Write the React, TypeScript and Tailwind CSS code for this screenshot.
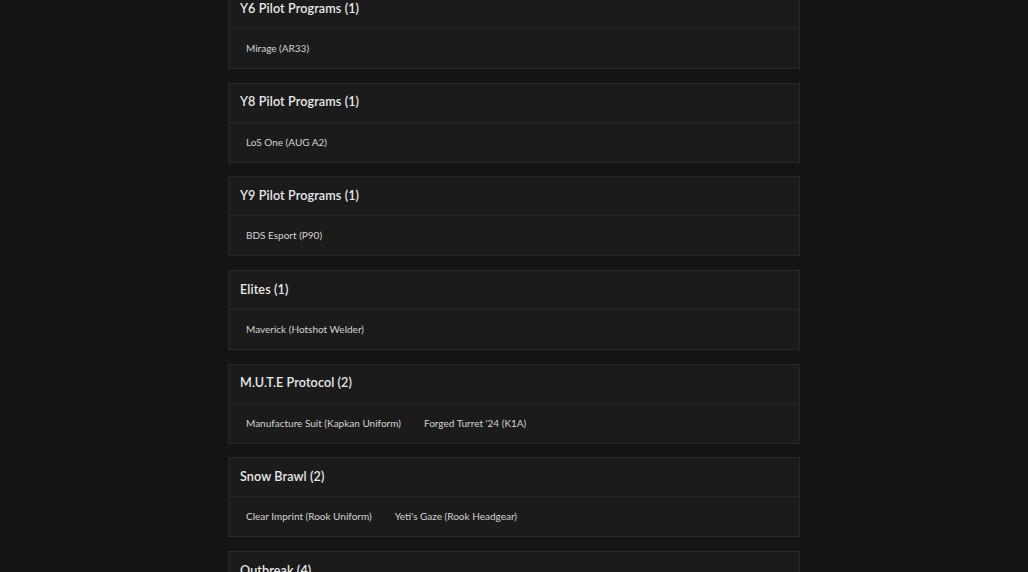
import React from "react";

const cards: { title: string; items: string[] }[] = [
  { title: "Y6 Pilot Programs (1)", items: ["Mirage (AR33)"] },
  { title: "Y8 Pilot Programs (1)", items: ["LoS One (AUG A2)"] },
  { title: "Y9 Pilot Programs (1)", items: ["BDS Esport (P90)"] },
  { title: "Elites (1)", items: ["Maverick (Hotshot Welder)"] },
  { title: "M.U.T.E Protocol (2)", items: ["Manufacture Suit (Kapkan Uniform)", "Forged Turret '24 (K1A)"] },
  { title: "Snow Brawl (2)", items: ["Clear Imprint (Rook Uniform)", "Yeti's Gaze (Rook Headgear)"] },
  { title: "Outbreak (4)", items: ["Item"] },
];

export default function App() {
  return (
    <div
      className="w-[1028px] h-[572px] overflow-hidden bg-[#141414]"
      style={{ fontFamily: 'Lato, "Open Sans", sans-serif' }}
    >
      <div className="w-[572px] mx-auto -mt-[11px] flex flex-col gap-[13.7px]">
        {cards.map((c) => (
          <div key={c.title} className="border border-[#282828] bg-[#1b1b1b] shrink-0">
            <div className="h-[39px] flex items-center px-[11px] border-b border-[#282828] text-[12.6px] font-semibold tracking-[0.1px] text-[#e8e8e8]">
              {c.title}
            </div>
            <div className="h-[39px] flex items-center pl-[17px] gap-[23px] text-[10px] text-[#d4d4d4]">
              {c.items.map((i) => (
                <span key={i}>{i}</span>
              ))}
            </div>
          </div>
        ))}
      </div>
    </div>
  );
}
